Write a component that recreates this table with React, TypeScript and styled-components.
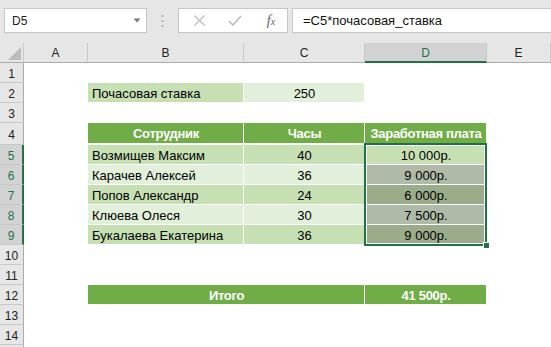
import styled, { createGlobalStyle } from 'styled-components';

const GlobalStyle = createGlobalStyle`
	html,
	body {
		margin: 0;
		padding: 0;
		background: #fff;
	}
	body {
		font-family: 'Liberation Sans', Arial, sans-serif;
	}
`;

const XL_GREEN = '#217346';

type Tone = 'light' | 'pale' | 'head' | 'shadeLight' | 'shadePale';

const tones: Record<Tone, { bg: string; color: string; bold: boolean }> = {
	light: { bg: '#c6e0b4', color: '#000', bold: false },
	pale: { bg: '#e2efda', color: '#000', bold: false },
	head: { bg: '#70ad47', color: '#fff', bold: true },
	shadeLight: { bg: '#9bac8b', color: '#000', bold: false },
	shadePale: { bg: '#afbba8', color: '#000', bold: false },
};

const StyledWindow = styled.div`
	width: 551px;
	height: 347px;
	overflow: hidden;
	background: #e6e6e6;
`;

const StyledFormulaBar = styled.div`
	display: flex;
	align-items: flex-start;
	height: 43px;
	box-sizing: border-box;
	padding: 8px 0 0 4px;
`;

const StyledNameBox = styled.div`
	width: 143px;
	height: 25px;
	box-sizing: border-box;
	display: flex;
	align-items: center;
	justify-content: space-between;
	padding: 0 5px 0 7px;
	background: #fff;
	border: 1px solid #c6c6c6;
	font-size: 12px;
	color: #222;
`;

const StyledGrip = styled.div`
	width: 31px;
	height: 25px;
	display: flex;
	align-items: center;
	justify-content: center;
`;

const StyledFxButtons = styled.div`
	width: 110px;
	height: 25px;
	box-sizing: border-box;
	display: grid;
	grid-template-columns: repeat(3, 36px);
	align-items: center;
	justify-items: center;
	padding-left: 2px;
	background: #fff;
	border: 1px solid #c6c6c6;
`;

const StyledFx = styled.span`
	font-family: 'Liberation Serif', 'Times New Roman', serif;
	font-style: italic;
	font-size: 14px;
	color: #5c5c5c;

	sub {
		font-size: 10px;
		vertical-align: baseline;
	}
`;

const StyledFormula = styled.div`
	flex: 1;
	height: 25px;
	box-sizing: border-box;
	margin: 0 -2px 0 4px;
	display: flex;
	align-items: center;
	padding-left: 10px;
	background: #fff;
	border: 1px solid #c6c6c6;
	font-size: 13px;
	color: #111;
`;

const StyledSheet = styled.div`
	display: grid;
	grid-template-columns: 24px 64px 156px 121px 122px 64px;
	grid-template-rows: 20px 20px 20px 20px 22px repeat(11, 20px);
	background: #fff;
`;

const StyledCorner = styled.div`
	grid-row: 1;
	grid-column: 1;
	background: #e6e6e6;
	box-sizing: border-box;
	border-right: 1px solid #c8c8c8;
	border-bottom: 1px solid #ababab;
`;

const StyledColHead = styled.div<{ $col: number; $active?: boolean }>`
	grid-row: 1;
	grid-column: ${(p) => p.$col};
	display: flex;
	align-items: center;
	justify-content: center;
	box-sizing: border-box;
	background: ${(p) => (p.$active ? '#d2d2d2' : '#e6e6e6')};
	border-right: 1px solid #c8c8c8;
	border-bottom: ${(p) => (p.$active ? `2px solid ${XL_GREEN}` : '1px solid #ababab')};
	font-size: 12px;
	color: ${(p) => (p.$active ? XL_GREEN : '#222')};
	padding-top: ${(p) => (p.$active ? '1px' : '0')};
`;

const StyledRowHead = styled.div<{ $row: number; $active?: boolean }>`
	grid-row: ${(p) => p.$row + 1};
	grid-column: 1;
	display: flex;
	align-items: center;
	justify-content: center;
	box-sizing: border-box;
	padding-top: 2px;
	background: ${(p) => (p.$active ? '#d2d2d2' : '#e6e6e6')};
	border-right: ${(p) => (p.$active ? `2px solid ${XL_GREEN}` : '1px solid #ababab')};
	border-bottom: 1px solid #c8c8c8;
	font-size: 12px;
	color: ${(p) => (p.$active ? XL_GREEN : '#222')};
`;

const StyledCell = styled.div<{
	$row: number;
	$col: string;
	$tone: Tone;
	$align?: 'left' | 'center';
	$under?: number;
}>`
	grid-row: ${(p) => p.$row + 1};
	grid-column: ${(p) => p.$col};
	display: flex;
	align-items: center;
	justify-content: ${(p) => (p.$align === 'left' ? 'flex-start' : 'center')};
	box-sizing: border-box;
	padding: ${(p) => `1px 4px ${p.$under ?? 1}px 4px`};
	background: ${(p) => tones[p.$tone].bg};
	box-shadow: ${(p) => `inset -1px -${p.$under ?? 1}px 0 #fff`};
	color: ${(p) => tones[p.$tone].color};
	font-size: 13px;
	font-weight: ${(p) => (tones[p.$tone].bold ? 700 : 400)};
	letter-spacing: ${(p) => (tones[p.$tone].bold ? '-0.3px' : '0')};
	white-space: nowrap;
`;

// selection frame around D5:D9, drawn over the cells
const StyledSelection = styled.div`
	grid-row: 6 / 11;
	grid-column: 5;
	position: relative;
	z-index: 2;
	margin: -2px 0 -1px -1px;
	border: 2px solid ${XL_GREEN};
	box-shadow: inset 0 0 0 1px #fff;
	pointer-events: none;
`;

const StyledFillHandle = styled.span`
	position: absolute;
	right: -4px;
	bottom: -4px;
	width: 5px;
	height: 5px;
	background: ${XL_GREEN};
	border-top: 1px solid #fff;
	border-left: 1px solid #fff;
`;

const RATE = 250;

const staff = [
	{ name: 'Возмищев Максим', hours: 40 },
	{ name: 'Карачев Алексей', hours: 36 },
	{ name: 'Попов Александр', hours: 24 },
	{ name: 'Клюева Олеся', hours: 30 },
	{ name: 'Букалаева Екатерина', hours: 36 },
];

const columns = [
	{ label: 'A', col: 2 },
	{ label: 'B', col: 3 },
	{ label: 'C', col: 4 },
	{ label: 'D', col: 5 },
	{ label: 'E', col: 6 },
];

const formatMoney = (value: number) => `${value.toString().replace(/\B(?=(\d{3})+(?!\d))/g, ' ')}р.`;

export default function App() {
	const total = staff.reduce((sum, item) => sum + item.hours * RATE, 0);
	const rowNumbers = Array.from({ length: 14 }, (_, i) => i + 1);

	return (
		<StyledWindow>
			<GlobalStyle />
			<StyledFormulaBar>
				<StyledNameBox>
					<span>D5</span>
					<svg width="8" height="5" viewBox="0 0 8 5">
						<polygon points="0.5,0.5 7.5,0.5 4,4.5" fill="#7a7a7a" />
					</svg>
				</StyledNameBox>
				<StyledGrip>
					<svg width="3" height="12" viewBox="0 0 3 12">
						<rect x="0.5" y="0" width="2" height="2" fill="#b4b4b4" />
						<rect x="0.5" y="5" width="2" height="2" fill="#b4b4b4" />
						<rect x="0.5" y="10" width="2" height="2" fill="#b4b4b4" />
					</svg>
				</StyledGrip>
				<StyledFxButtons>
					<svg width="11" height="11" viewBox="0 0 11 11">
						<path d="M0.5 0.5 L10.5 10.5 M10.5 0.5 L0.5 10.5" stroke="#bcbcbc" strokeWidth="1.3" />
					</svg>
					<svg width="14" height="11" viewBox="0 0 14 11">
						<path d="M1 6 L5 10 L13 1" stroke="#bcbcbc" strokeWidth="1.6" fill="none" />
					</svg>
					<StyledFx>
						f<sub>x</sub>
					</StyledFx>
				</StyledFxButtons>
				<StyledFormula>=C5*почасовая_ставка</StyledFormula>
			</StyledFormulaBar>

			<StyledSheet>
				<StyledCorner>
					<svg width="23" height="19" viewBox="0 0 23 19">
						<polygon points="21,4 21,17 8,17" fill="#bcbcbc" />
					</svg>
				</StyledCorner>
				{columns.map(({ label, col }) => (
					<StyledColHead key={`col-${label}`} $col={col} $active={label === 'D'}>
						{label}
					</StyledColHead>
				))}
				{rowNumbers.map((row) => (
					<StyledRowHead key={`row-${row}`} $row={row} $active={row >= 5 && row <= 9}>
						{row}
					</StyledRowHead>
				))}
				{/* next row header, only its top edge is on screen */}
				<StyledRowHead $row={15} />

				<StyledCell $row={2} $col="3" $tone="light" $align="left">
					Почасовая ставка
				</StyledCell>
				<StyledCell $row={2} $col="4" $tone="pale">
					{RATE}
				</StyledCell>

				<StyledCell $row={4} $col="3" $tone="head" $under={2}>
					Сотрудник
				</StyledCell>
				<StyledCell $row={4} $col="4" $tone="head" $under={2}>
					Часы
				</StyledCell>
				<StyledCell $row={4} $col="5" $tone="head" $under={2}>
					Заработная плата
				</StyledCell>

				{staff.map((item, index) => {
					const row = 5 + index;
					const odd = index % 2 === 0;
					const tone: Tone = odd ? 'light' : 'pale';
					const payTone: Tone = index === 0 ? 'light' : odd ? 'shadeLight' : 'shadePale';
					return [
						<StyledCell key={`name-${row}`} $row={row} $col="3" $tone={tone} $align="left">
							{item.name}
						</StyledCell>,
						<StyledCell key={`hours-${row}`} $row={row} $col="4" $tone={tone}>
							{item.hours}
						</StyledCell>,
						<StyledCell key={`pay-${row}`} $row={row} $col="5" $tone={payTone}>
							{formatMoney(item.hours * RATE)}
						</StyledCell>,
					];
				})}

				<StyledSelection>
					<StyledFillHandle />
				</StyledSelection>

				<StyledCell $row={12} $col="3 / 5" $tone="head">
					Итого
				</StyledCell>
				<StyledCell $row={12} $col="5" $tone="head">
					{formatMoney(total)}
				</StyledCell>
			</StyledSheet>
		</StyledWindow>
	);
}
